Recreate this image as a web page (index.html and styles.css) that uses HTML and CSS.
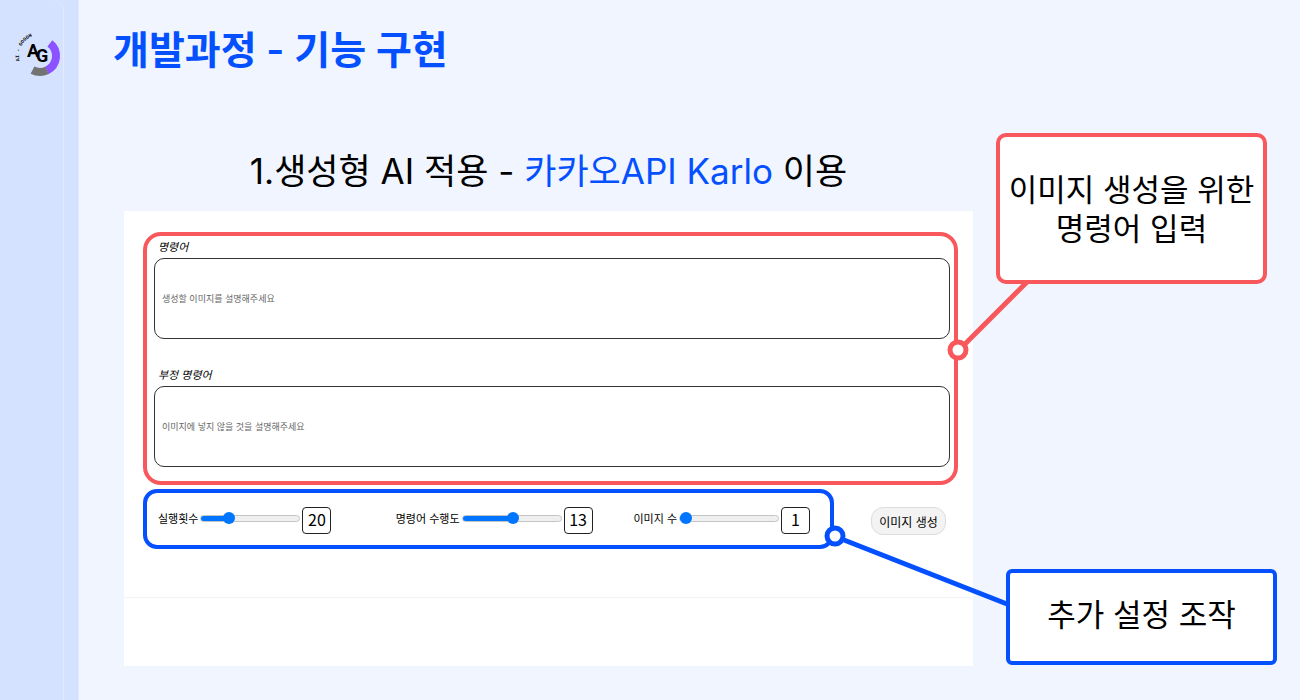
FILE: index.html
```html
<!DOCTYPE html>
<html lang="ko">
<head>
<meta charset="utf-8">
<meta name="viewport" content="width=device-width, initial-scale=1">
<title>개발과정 - 기능 구현</title>
<link rel="stylesheet" href="styles.css">
</head>
<body>
<div class="slide">
  <aside class="rail">
    <div class="rail-inner">
      <svg class="logo" viewBox="0 0 50 50" role="img" aria-label="AG">
        <path d="M37.9 13.4A16 16 0 0 1 34.8 40.5" fill="none" stroke="#8c52ff" stroke-width="8"/>
        <path d="M35 40.4A16 16 0 0 1 20.5 40.1" fill="none" stroke="#737373" stroke-width="8"/>
        <path id="arc" d="M7.6 31A21 21 0 0 1 30 5" fill="none"/>
        <text class="logo-ring"><textPath href="#arc">AI - GOGOH</textPath></text>
        <text class="logo-mark" x="15" y="27">A<tspan dx="-3" dy="5">G</tspan></text>
      </svg>
    </div>
  </aside>

  <main class="content">
    <h1 class="title">개발과정 - 기능 구현</h1>
    <div class="board">
      <section class="demo">
        <h2 class="subtitle">1.생성형 AI 적용 - <span class="accent">카카오API Karlo</span> 이용</h2>
        <form class="panel">
          <div class="prompts">
            <label class="prompt-label" for="prompt">명령어</label>
            <input class="prompt" id="prompt" type="text" placeholder="생성할 이미지를 설명해주세요">
            <label class="prompt-label" for="negative">부정 명령어</label>
            <input class="prompt" id="negative" type="text" placeholder="이미지에 넣지 않을 것을 설명해주세요">
          </div>
          <div class="controls">
            <div class="settings">
              <div class="setting">
                <label for="steps">실행횟수</label>
                <input class="slider" id="steps" type="range" min="10" max="50" value="20" style="--fill: 27%">
                <output class="value" for="steps">20</output>
              </div>
              <div class="setting">
                <label for="guidance">명령어 수행도</label>
                <input class="slider" id="guidance" type="range" min="1" max="24" value="13" style="--fill: 52%">
                <output class="value" for="guidance">13</output>
              </div>
              <div class="setting">
                <label for="count">이미지 수</label>
                <input class="slider" id="count" type="range" min="1" max="8" value="1" style="--fill: 4%">
                <output class="value" for="count">1</output>
              </div>
            </div>
            <button class="generate" type="button">이미지 생성</button>
          </div>
          <div class="result"></div>
        </form>
      </section>

      <aside class="notes">
        <div class="note note-red">
          <svg class="link link-red" viewBox="0 0 82 82" aria-hidden="true">
            <path d="M18 64L80 2" stroke="#f8585c" stroke-width="5"/>
            <circle cx="11" cy="70" r="8" fill="#fff" stroke="#f8585c" stroke-width="5"/>
          </svg>
          <p>이미지 생성을 위한<br>명령어 입력</p>
        </div>
        <div class="note note-blue">
          <svg class="link link-blue" viewBox="0 0 186 84" aria-hidden="true">
            <path d="M20 15L183 79" stroke="#0450ff" stroke-width="5"/>
            <circle cx="11" cy="11" r="8" fill="#fff" stroke="#0450ff" stroke-width="5"/>
          </svg>
          <p>추가 설정 조작</p>
        </div>
      </aside>
    </div>
  </main>
</div>
</body>
</html>
```
FILE: styles.css
```css
:root {
  --blue: #0450ff;
  --red: #f8585c;
  --ink: #000;
}

* {
  box-sizing: border-box;
}

body {
  margin: 0;
  background: #f0f5ff;
  color: var(--ink);
  font-family: Inter, "Noto Sans CJK KR", sans-serif;
}

.slide {
  display: flex;
  min-height: 100vh;
}

.rail {
  flex: none;
  width: 79px;
  padding-right: 14px;
  background: #d5e2ff;
  border-right: 1px solid #dfe9ff;
}

.rail-inner {
  height: 100%;
  padding: 30px 0 0 12px;
  border-right: 1px solid #e2ebff;
  border-radius: 12px 12px 0 0;
}

.logo {
  display: block;
  width: 50px;
  height: 50px;
}

.logo-ring {
  font: 700 5px "Liberation Mono", monospace;
}

.logo-mark {
  font: 700 18px Roboto, sans-serif;
}

.content {
  flex: 1;
  min-width: 0;
  padding: 20px 23px 34px 45px;
}

.title {
  margin: 0 0 0 -11px;
  color: var(--blue);
  font-size: 39px;
  line-height: 60px;
  font-weight: 600;
}

.board {
  display: grid;
  grid-template-columns: 1fr 281px;
  gap: 23px;
  padding-top: 53px;
}

.demo {
  display: flex;
  flex-direction: column;
}

.subtitle {
  margin: 0;
  padding: 12px 0 14px;
  font-size: 35px;
  line-height: 52px;
  font-weight: 400;
  text-align: center;
}

.accent {
  color: var(--blue);
}

.panel {
  flex: 1;
  display: flex;
  flex-direction: column;
  padding-top: 21px;
  background: #fff;
}

.prompts {
  display: flex;
  flex-direction: column;
  margin: 0 15px 0 19px;
  padding: 0 4px 14px 7px;
  border: 4px solid var(--red);
  border-radius: 18px;
}

.prompt-label {
  padding-left: 4px;
  font-size: 11px;
  line-height: 22px;
  font-style: italic;
}

.prompt {
  height: 81px;
  margin-bottom: 25px;
  padding: 0 7px;
  border: 1px solid #333;
  border-radius: 10px;
  background: #fff;
  font: inherit;
  font-size: 9px;
}

.prompt:last-child {
  margin-bottom: 0;
}

.prompt::placeholder {
  color: #666;
  opacity: 1;
}

.controls {
  display: flex;
  align-items: center;
  gap: 37px;
  margin: 4px 27px 0 19px;
}

.settings {
  flex: 1;
  display: grid;
  grid-template-columns: 1fr 1fr auto;
  padding: 10px 20px 10px 11px;
  border: 4px solid var(--blue);
  border-radius: 14px;
}

.setting {
  display: flex;
  align-items: center;
  gap: 2px;
  height: 32px;
  font-size: 11px;
  line-height: 16px;
}

.slider {
  appearance: none;
  width: 100px;
  height: 14px;
  margin: 0 0 2px;
  background: none;
}

.slider::-webkit-slider-runnable-track {
  height: 7px;
  border: 1px solid #c4c4c4;
  border-radius: 4px;
  background: linear-gradient(to right, #0075ff var(--fill), #efefef var(--fill)) border-box;
}

.slider::-webkit-slider-thumb {
  appearance: none;
  width: 12px;
  height: 12px;
  margin-top: -4px;
  border-radius: 50%;
  background: #0075ff;
}

.value {
  width: 29px;
  height: 27px;
  margin-top: 3px;
  border: 1px solid #222;
  border-radius: 4px;
  font: 16px/22px "Noto Sans CJK KR", sans-serif;
  text-align: center;
}

.generate {
  width: 75px;
  height: 28px;
  margin-top: 4px;
  padding: 0;
  border: 1px solid #dcdcdc;
  border-radius: 12px;
  background: #f3f3f3;
  color: var(--ink);
  font: inherit;
  font-size: 12px;
}

.result {
  height: 69px;
  margin-top: 48px;
  border-top: 1px solid #f3f3f5;
}

.notes {
  display: flex;
  flex-direction: column;
  justify-content: space-between;
}

.note {
  position: relative;
  display: flex;
  align-items: center;
  justify-content: center;
  width: 271px;
  border: 4px solid;
  background: #fff;
  font-size: 31px;
  line-height: 39px;
  text-align: center;
}

.note p {
  margin: 0;
  color: var(--ink);
}

.note-red {
  height: 151px;
  border-color: var(--red);
  border-radius: 10px;
}

.note-blue {
  align-self: flex-end;
  height: 96px;
  margin-bottom: 1px;
  padding-bottom: 6px;
  border-color: var(--blue);
  border-radius: 6px;
}

.link {
  position: absolute;
  fill: none;
}

.link-red {
  width: 82px;
  height: 82px;
  left: -53px;
  top: 143px;
}

.link-blue {
  width: 186px;
  height: 84px;
  left: -186px;
  top: -48px;
}
```
